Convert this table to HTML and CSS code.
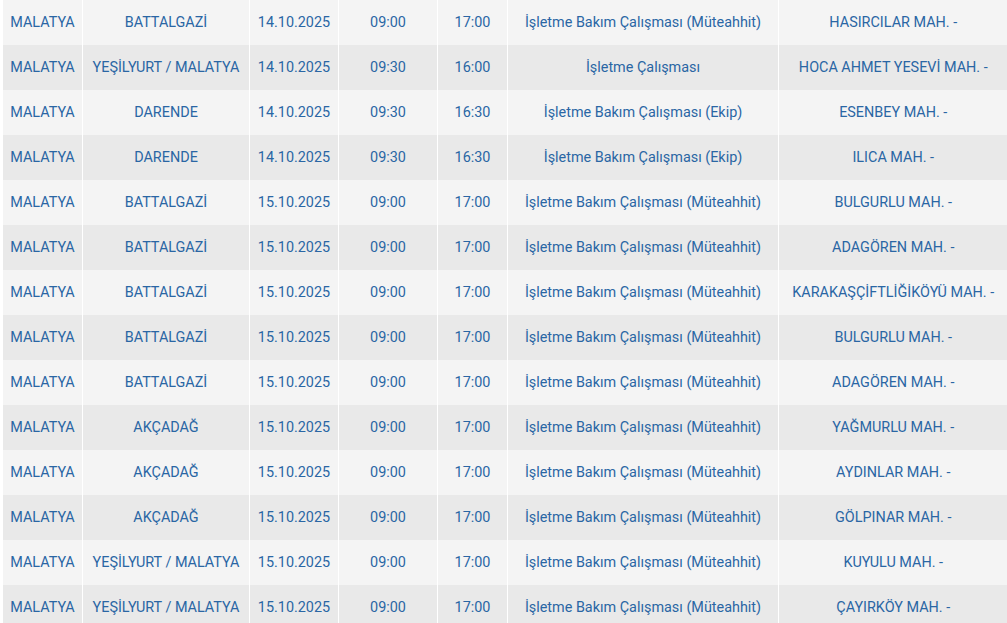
FILE: index.html
```html
<!DOCTYPE html>
<html lang="tr">
<head>
<meta charset="utf-8">
<link rel="stylesheet" href="styles.css">
</head>
<body>
<div class="wrap">
<table class="outages">
<colgroup>
<col class="c1"><col class="c2"><col class="c3"><col class="c4"><col class="c5"><col class="c6"><col class="c7">
</colgroup>
<tbody>
<tr><td>MALATYA</td><td>BATTALGAZİ</td><td>14.10.2025</td><td>09:00</td><td>17:00</td><td>İşletme Bakım Çalışması (Müteahhit)</td><td>HASIRCILAR MAH. -</td></tr>
<tr><td>MALATYA</td><td>YEŞİLYURT / MALATYA</td><td>14.10.2025</td><td>09:30</td><td>16:00</td><td>İşletme Çalışması</td><td>HOCA AHMET YESEVİ MAH. -</td></tr>
<tr><td>MALATYA</td><td>DARENDE</td><td>14.10.2025</td><td>09:30</td><td>16:30</td><td>İşletme Bakım Çalışması (Ekip)</td><td>ESENBEY MAH. -</td></tr>
<tr><td>MALATYA</td><td>DARENDE</td><td>14.10.2025</td><td>09:30</td><td>16:30</td><td>İşletme Bakım Çalışması (Ekip)</td><td>ILICA MAH. -</td></tr>
<tr><td>MALATYA</td><td>BATTALGAZİ</td><td>15.10.2025</td><td>09:00</td><td>17:00</td><td>İşletme Bakım Çalışması (Müteahhit)</td><td>BULGURLU MAH. -</td></tr>
<tr><td>MALATYA</td><td>BATTALGAZİ</td><td>15.10.2025</td><td>09:00</td><td>17:00</td><td>İşletme Bakım Çalışması (Müteahhit)</td><td>ADAGÖREN MAH. -</td></tr>
<tr><td>MALATYA</td><td>BATTALGAZİ</td><td>15.10.2025</td><td>09:00</td><td>17:00</td><td>İşletme Bakım Çalışması (Müteahhit)</td><td>KARAKAŞÇİFTLİĞİKÖYÜ MAH. -</td></tr>
<tr><td>MALATYA</td><td>BATTALGAZİ</td><td>15.10.2025</td><td>09:00</td><td>17:00</td><td>İşletme Bakım Çalışması (Müteahhit)</td><td>BULGURLU MAH. -</td></tr>
<tr><td>MALATYA</td><td>BATTALGAZİ</td><td>15.10.2025</td><td>09:00</td><td>17:00</td><td>İşletme Bakım Çalışması (Müteahhit)</td><td>ADAGÖREN MAH. -</td></tr>
<tr><td>MALATYA</td><td>AKÇADAĞ</td><td>15.10.2025</td><td>09:00</td><td>17:00</td><td>İşletme Bakım Çalışması (Müteahhit)</td><td>YAĞMURLU MAH. -</td></tr>
<tr><td>MALATYA</td><td>AKÇADAĞ</td><td>15.10.2025</td><td>09:00</td><td>17:00</td><td>İşletme Bakım Çalışması (Müteahhit)</td><td>AYDINLAR MAH. -</td></tr>
<tr><td>MALATYA</td><td>AKÇADAĞ</td><td>15.10.2025</td><td>09:00</td><td>17:00</td><td>İşletme Bakım Çalışması (Müteahhit)</td><td>GÖLPINAR MAH. -</td></tr>
<tr><td>MALATYA</td><td>YEŞİLYURT / MALATYA</td><td>15.10.2025</td><td>09:00</td><td>17:00</td><td>İşletme Bakım Çalışması (Müteahhit)</td><td>KUYULU MAH. -</td></tr>
<tr><td>MALATYA</td><td>YEŞİLYURT / MALATYA</td><td>15.10.2025</td><td>09:00</td><td>17:00</td><td>İşletme Bakım Çalışması (Müteahhit)</td><td>ÇAYIRKÖY MAH. -</td></tr>
</tbody>
</table>
</div>
</body>
</html>
```
FILE: styles.css
```css
html, body {
  margin: 0;
  padding: 0;
  background: #ffffff;
}
.wrap {
  padding-left: 2px;
  overflow: hidden;
}
.outages {
  border-collapse: collapse;
  table-layout: fixed;
  width: 1005px;
  font-family: Roboto, "Noto Sans", sans-serif;
  font-size: 14.4px;
  font-weight: 400;
  color: #2a66a4;
}
.c1 { width: 80px; }
.c2 { width: 167px; }
.c3 { width: 89px; }
.c4 { width: 99px; }
.c5 { width: 70px; }
.c6 { width: 271px; }
.c7 { width: 229px; }
.outages td {
  height: 45px;
  padding: 0 0 1px;
  border-left: 1px solid #ffffff;
  text-align: center;
  vertical-align: middle;
  white-space: nowrap;
  box-sizing: border-box;
}
.outages tr:nth-child(odd) td { background: #f4f4f4; }
.outages tr:nth-child(even) td { background: #e9e9e9; }
```
